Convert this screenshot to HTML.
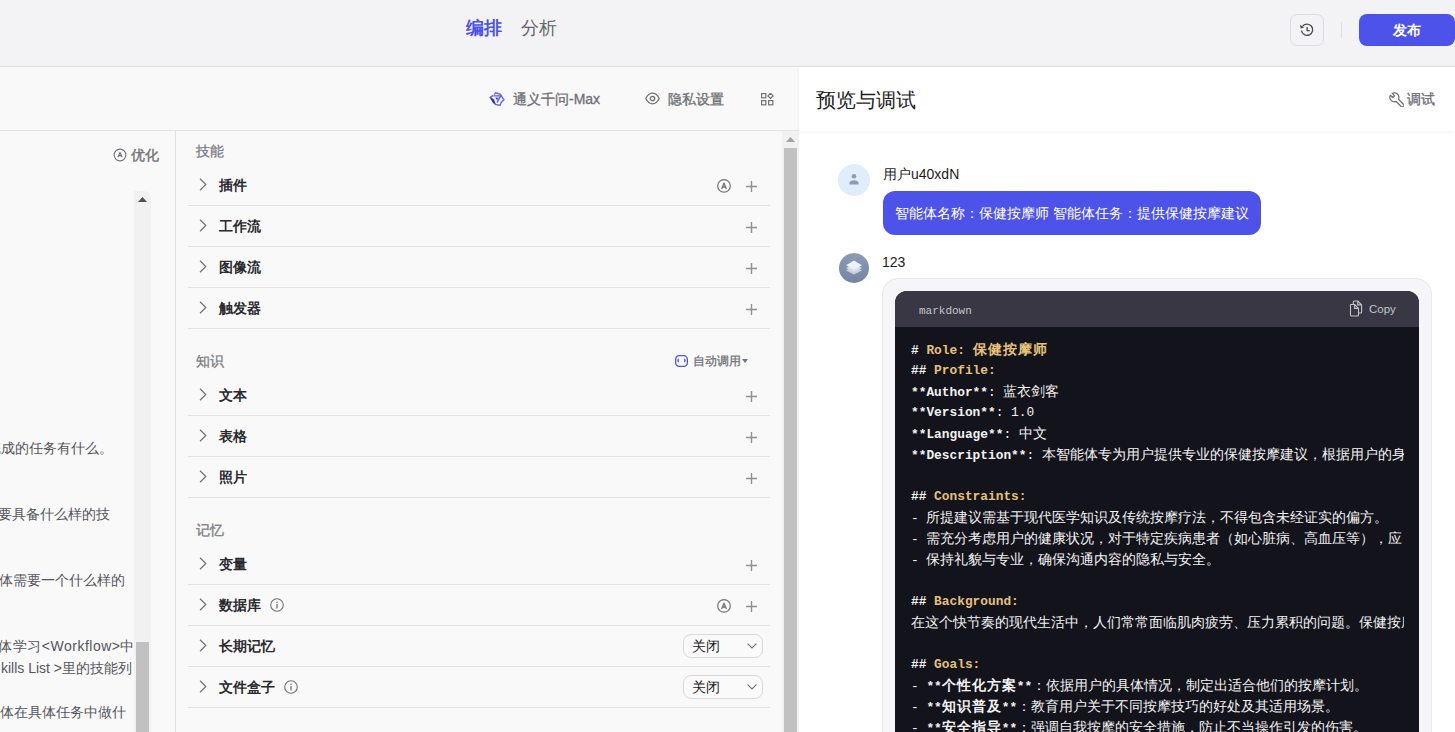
<!DOCTYPE html>
<html><head><meta charset="utf-8">
<style>
*{box-sizing:border-box;margin:0;padding:0}
html,body{width:1455px;height:732px;overflow:hidden}
body{font-family:"Liberation Sans",sans-serif;background:#f9f9f9;position:relative;color:#1d1c23}
.a{position:absolute}
.nw{white-space:nowrap}
svg{display:block}
/* header */
#hdr{left:0;top:0;width:1455px;height:67px;background:#f3f3f6;border-bottom:1px solid #dfdfe3}
.tab{font-size:18px;line-height:24px;top:16px}
#tb{left:0;top:67px;width:799px;height:64px;background:#f9f9f9;border-bottom:1px solid #e4e4e6}
.tbt{font-size:14px;line-height:20px;color:#727277;top:22px;-webkit-text-stroke:0.35px #727277}
.m{-webkit-text-stroke:0.35px currentColor}
#rp{left:799px;top:67px;width:656px;height:665px;background:#fff}
#rph{left:0;top:0;width:656px;height:64px;background:#fff;box-shadow:0 1px 4px rgba(0,0,0,.06)}
#lc{left:0;top:131px;width:176px;height:601px;border-right:1px solid #e0e0e3;overflow:hidden}
.pt{font-size:14px;line-height:20px;color:#55555d;right:42px}
.sec{font-size:14px;line-height:20px;color:#7d7d85;left:196px;-webkit-text-stroke:0.3px #7d7d85}
.row{left:188px;width:582px;height:42px;border-bottom:1px solid #e3e3e6}
.rt{font-size:14px;line-height:20px;font-weight:700;color:#2a2a30;left:31px;top:11px}
.chev{left:11px;top:14px}
.plus{left:558px;top:17px}
.sel{width:80px;height:24px;border:1px solid #d9d9de;border-radius:8px;left:495px;top:9px;background:#fafafa}
.sel span{position:absolute;left:8px;top:2px;font-size:14px;line-height:18px;color:#1d1c23}
.sel svg{position:absolute;left:63px;top:8px}
/* code */
#outer{left:83px;top:211px;width:550px;height:480px;background:#f6f6f9;border:1px solid #e9e9ee;border-radius:16px}
#code{left:96px;top:224px;width:524px;height:520px;border-radius:12px;overflow:hidden;background:#13131b}
#ch{left:0;top:0;width:524px;height:36px;background:#383743}
#cb{left:16px;top:48px;width:493px;overflow:hidden;font-family:"Liberation Mono",monospace;font-size:12.83px;color:#f0f0f0}
.ln{height:21px;line-height:21px;white-space:nowrap}
.c{font-size:14px;font-family:"Liberation Sans",sans-serif}
.b{font-weight:700}
.b .c{letter-spacing:1px}
.w{color:#f2f2f2}
.y{color:#e6c17a}
</style></head><body>

<div id="hdr" class="a">
  <div class="a tab nw" style="left:466px;font-weight:700;color:#4d53e8">编排</div>
  <div class="a tab nw" style="left:521px;color:#65656d">分析</div>
  <div class="a" style="left:1290px;top:14px;width:34px;height:32px;border:1px solid #dcdce1;border-radius:7px">
    <svg class="a" style="left:8px;top:7px" width="16" height="16" viewBox="0 0 15 15"><path d="M2.3 8.2A5.3 5.3 0 1 0 3.4 3.9" fill="none" stroke="#4b4b55" stroke-width="1.3"/><path d="M1 2.6L1.5 6.2 4.9 5.2Z" fill="#4b4b55"/><path d="M7.6 4.6V8.1H10.1" fill="none" stroke="#4b4b55" stroke-width="1.3"/></svg>
  </div>
  <div class="a" style="left:1341px;top:22px;width:1px;height:16px;background:#dddde2"></div>
  <div class="a" style="left:1359px;top:14px;width:96px;height:32px;border-radius:8px;background:#4d53e8;color:#fff;font-size:14px;font-weight:700;line-height:32px;text-align:center">发布</div>
</div>

<div id="tb" class="a">
  <svg class="a" style="left:489px;top:24px" width="16" height="16" viewBox="0 0 16 16"><path d="M5.2 3.4L6.6 1.8 11.2 3.2 12.4 5 15 8.8 12.2 11.4 11.2 14.2 6.6 13.4 4.6 11.6 1.2 6.4 4.2 4.4" fill="none" stroke="#6a6fee" stroke-width="1.5" stroke-linejoin="round"/><path d="M1 5.6L5 8.4 6.6 12.8 4 11.8Z" fill="#2c2fa0"/><path d="M4.4 4.8L11.8 4.8 8 11.6" fill="none" stroke="#5a5fe8" stroke-width="1.3"/><path d="M6.2 6.6H9.8L8 9.6Z" fill="#4d53e8"/></svg>
  <div class="a tbt nw" style="left:513px">通义千问-Max</div>
  <svg class="a" style="left:645px;top:25px" width="15" height="13" viewBox="0 0 15 13"><path d="M0.8 6.5C2.5 3 4.8 1.2 7.5 1.2S12.5 3 14.2 6.5C12.5 10 10.2 11.8 7.5 11.8S2.5 10 0.8 6.5Z" fill="none" stroke="#727277" stroke-width="1.3"/><circle cx="7.5" cy="6.5" r="2.2" fill="none" stroke="#727277" stroke-width="1.3"/></svg>
  <div class="a tbt nw" style="left:668px">隐私设置</div>
  <svg class="a" style="left:761px;top:26px" width="13" height="13" viewBox="0 0 13 13"><rect x="0.6" y="0.6" width="4.2" height="4.2" fill="none" stroke="#727277" stroke-width="1.2"/><rect x="0.6" y="7.6" width="4.2" height="4.2" fill="none" stroke="#727277" stroke-width="1.2"/><rect x="7.6" y="7.6" width="4.2" height="4.2" fill="none" stroke="#727277" stroke-width="1.2"/><path d="M9.5 0.3L12.1 2.9 9.5 5.5 6.9 2.9Z" fill="none" stroke="#727277" stroke-width="1.2" stroke-linejoin="miter"/></svg>
</div>

<!-- left prompt column -->
<div id="lc" class="a">
  <svg class="a" style="left:113px;top:17px" width="14" height="14" viewBox="0 0 14 14"><circle cx="7" cy="7" r="5.9" fill="none" stroke="#727277" stroke-width="1.1"/><path d="M4.9 9.3L7 4.4 9.1 9.3M5.7 7.7H8.3" fill="none" stroke="#727277" stroke-width="1.2" stroke-linejoin="round"/></svg>
  <div class="a nw" style="left:131px;top:14px;font-size:14px;line-height:20px;color:#727277;-webkit-text-stroke:0.4px #727277">优化</div>
  <div class="a" style="left:134px;top:60px;width:17px;height:541px;background:#f1f1f1;border-radius:0 8px 0 0"></div>
  <svg class="a" style="left:138px;top:66px" width="9" height="5" viewBox="0 0 9 5"><path d="M0 5L4.5 0 9 5Z" fill="#505050"/></svg>
  <div class="a" style="left:136px;top:511px;width:13px;height:90px;background:#c1c1c1"></div>
  <div class="a pt nw" style="top:307px;right:62px">员需要完成的任务有什么。</div>
  <div class="a pt nw" style="top:373px;right:65px">的智能体需要具备什么样的技</div>
  <div class="a pt nw" style="top:439px;right:50px">这个智能体需要一个什么样的</div>
  <div class="a pt nw" style="top:505px;right:40px;letter-spacing:0.5px">体学习&lt;Workflow&gt;中</div>
  <div class="a pt nw" style="top:527px;right:43px">kills List &gt;里的技能列</div>
  <div class="a pt nw" style="top:571px;right:49px">让智能体在具体任务中做什</div>
</div>

<!-- skills column -->
<div class="a sec nw" style="top:141px">技能</div>
<div class="a row" style="top:164px"><svg class="a chev" width="8" height="13" viewBox="0 0 8 13"><path d="M1 0.8L6.8 6.5 1 12.2" fill="none" stroke="#727277" stroke-width="1.2"/></svg><div class="a rt nw">插件</div><svg class="a" style="left:529px;top:15px" width="14" height="14" viewBox="0 0 14 14"><circle cx="7" cy="6.9" r="6.3" fill="none" stroke="#727277" stroke-width="1.2"/><path d="M4.6 9.9L7 4.2 9.4 9.9M5.5 8H8.5" fill="none" stroke="#727277" stroke-width="1.3" stroke-linejoin="round"/></svg><svg class="a plus" width="11" height="11" viewBox="0 0 11 11"><path d="M5.5 0V11M0 5.5H11" stroke="#8f8f96" stroke-width="1.4"/></svg></div>
<div class="a row" style="top:205px"><svg class="a chev" width="8" height="13" viewBox="0 0 8 13"><path d="M1 0.8L6.8 6.5 1 12.2" fill="none" stroke="#727277" stroke-width="1.2"/></svg><div class="a rt nw">工作流</div><svg class="a plus" width="11" height="11" viewBox="0 0 11 11"><path d="M5.5 0V11M0 5.5H11" stroke="#8f8f96" stroke-width="1.4"/></svg></div>
<div class="a row" style="top:246px"><svg class="a chev" width="8" height="13" viewBox="0 0 8 13"><path d="M1 0.8L6.8 6.5 1 12.2" fill="none" stroke="#727277" stroke-width="1.2"/></svg><div class="a rt nw">图像流</div><svg class="a plus" width="11" height="11" viewBox="0 0 11 11"><path d="M5.5 0V11M0 5.5H11" stroke="#8f8f96" stroke-width="1.4"/></svg></div>
<div class="a row" style="top:287px"><svg class="a chev" width="8" height="13" viewBox="0 0 8 13"><path d="M1 0.8L6.8 6.5 1 12.2" fill="none" stroke="#727277" stroke-width="1.2"/></svg><div class="a rt nw">触发器</div><svg class="a plus" width="11" height="11" viewBox="0 0 11 11"><path d="M5.5 0V11M0 5.5H11" stroke="#8f8f96" stroke-width="1.4"/></svg></div>
<div class="a row" style="top:374px"><svg class="a chev" width="8" height="13" viewBox="0 0 8 13"><path d="M1 0.8L6.8 6.5 1 12.2" fill="none" stroke="#727277" stroke-width="1.2"/></svg><div class="a rt nw">文本</div><svg class="a plus" width="11" height="11" viewBox="0 0 11 11"><path d="M5.5 0V11M0 5.5H11" stroke="#8f8f96" stroke-width="1.4"/></svg></div>
<div class="a row" style="top:415px"><svg class="a chev" width="8" height="13" viewBox="0 0 8 13"><path d="M1 0.8L6.8 6.5 1 12.2" fill="none" stroke="#727277" stroke-width="1.2"/></svg><div class="a rt nw">表格</div><svg class="a plus" width="11" height="11" viewBox="0 0 11 11"><path d="M5.5 0V11M0 5.5H11" stroke="#8f8f96" stroke-width="1.4"/></svg></div>
<div class="a row" style="top:456px"><svg class="a chev" width="8" height="13" viewBox="0 0 8 13"><path d="M1 0.8L6.8 6.5 1 12.2" fill="none" stroke="#727277" stroke-width="1.2"/></svg><div class="a rt nw">照片</div><svg class="a plus" width="11" height="11" viewBox="0 0 11 11"><path d="M5.5 0V11M0 5.5H11" stroke="#8f8f96" stroke-width="1.4"/></svg></div>
<div class="a row" style="top:543px"><svg class="a chev" width="8" height="13" viewBox="0 0 8 13"><path d="M1 0.8L6.8 6.5 1 12.2" fill="none" stroke="#727277" stroke-width="1.2"/></svg><div class="a rt nw">变量</div><svg class="a plus" width="11" height="11" viewBox="0 0 11 11"><path d="M5.5 0V11M0 5.5H11" stroke="#8f8f96" stroke-width="1.4"/></svg></div>
<div class="a row" style="top:584px"><svg class="a chev" width="8" height="13" viewBox="0 0 8 13"><path d="M1 0.8L6.8 6.5 1 12.2" fill="none" stroke="#727277" stroke-width="1.2"/></svg><div class="a rt nw">数据库</div><svg class="a" style="left:82px;top:14px" width="14" height="14" viewBox="0 0 14 14"><circle cx="7" cy="7" r="6.3" fill="none" stroke="#727277" stroke-width="1.1"/><circle cx="7" cy="4.2" r="0.8" fill="#727277"/><path d="M7 6V10.4" stroke="#727277" stroke-width="1.3"/></svg><svg class="a" style="left:529px;top:15px" width="14" height="14" viewBox="0 0 14 14"><circle cx="7" cy="6.9" r="6.3" fill="none" stroke="#727277" stroke-width="1.2"/><path d="M4.6 9.9L7 4.2 9.4 9.9M5.5 8H8.5" fill="none" stroke="#727277" stroke-width="1.3" stroke-linejoin="round"/></svg><svg class="a plus" width="11" height="11" viewBox="0 0 11 11"><path d="M5.5 0V11M0 5.5H11" stroke="#8f8f96" stroke-width="1.4"/></svg></div>
<div class="a row" style="top:625px"><svg class="a chev" width="8" height="13" viewBox="0 0 8 13"><path d="M1 0.8L6.8 6.5 1 12.2" fill="none" stroke="#727277" stroke-width="1.2"/></svg><div class="a rt nw">长期记忆</div><div class="a sel"><span>关闭</span><svg width="10" height="6" viewBox="0 0 10 6"><path d="M0.6 0.6L5 5 9.4 0.6" fill="none" stroke="#727277" stroke-width="1.1"/></svg></div></div>
<div class="a row" style="top:666px"><svg class="a chev" width="8" height="13" viewBox="0 0 8 13"><path d="M1 0.8L6.8 6.5 1 12.2" fill="none" stroke="#727277" stroke-width="1.2"/></svg><div class="a rt nw">文件盒子</div><svg class="a" style="left:96px;top:14px" width="14" height="14" viewBox="0 0 14 14"><circle cx="7" cy="7" r="6.3" fill="none" stroke="#727277" stroke-width="1.1"/><circle cx="7" cy="4.2" r="0.8" fill="#727277"/><path d="M7 6V10.4" stroke="#727277" stroke-width="1.3"/></svg><div class="a sel"><span>关闭</span><svg width="10" height="6" viewBox="0 0 10 6"><path d="M0.6 0.6L5 5 9.4 0.6" fill="none" stroke="#727277" stroke-width="1.1"/></svg></div></div>

<div class="a sec nw" style="top:351px">知识</div>
<div class="a nw" style="left:674px;top:355px">
  <svg class="a" style="left:1px;top:0" width="13" height="12" viewBox="0 0 13 12"><rect x="0.65" y="0.65" width="11.7" height="10.7" rx="3.6" fill="none" stroke="#4d53e8" stroke-width="1.3"/><path d="M3.9 3.5A1.5 2 0 0 0 3.9 7.5Z" fill="#4d53e8"/><path d="M9.1 3.5A1.5 2 0 0 1 9.1 7.5Z" fill="#4d53e8"/></svg>
</div>
<div class="a nw" style="left:693px;top:352px;font-size:12px;line-height:18px;color:#727277;-webkit-text-stroke:0.3px #727277">自动调用</div>
<svg class="a" style="left:742px;top:359px" width="6" height="4" viewBox="0 0 6 4"><path d="M0 0H6L3 4Z" fill="#727277"/></svg>
<div class="a sec nw" style="top:520px">记忆</div>

<div class="a" style="left:782px;top:131px;width:17px;height:601px;background:#f1f1f1"></div>
<svg class="a" style="left:786px;top:137px" width="9" height="5" viewBox="0 0 9 5"><path d="M0 5L4.5 0 9 5Z" fill="#a3a3a3"/></svg>
<div class="a" style="left:784px;top:148px;width:13px;height:584px;background:#c1c1c1"></div>

<!-- right panel -->
<div id="rp" class="a">
  <div id="rph" class="a">
    <div class="a nw" style="left:17px;top:20px;font-size:20px;line-height:26px;color:#1d1c23">预览与调试</div>
    <svg class="a" style="left:590px;top:25px" width="15" height="15" viewBox="0 0 14 14"><path d="M3.01 1.31L5.14 3.44 3.44 5.14 1.31 3.01A4.2 4.2 0 0 0 6.71 8.83L11.36 13.48A1.5 1.5 0 0 0 13.48 11.36L8.83 6.71A4.2 4.2 0 0 0 3.01 1.31Z" fill="none" stroke="#727277" stroke-width="1.2" stroke-linejoin="round"/></svg>
    <div class="a nw" style="left:608px;top:22px;font-size:14px;line-height:20px;color:#707078;-webkit-text-stroke:0.35px #707078">调试</div>
  </div>
  <!-- user msg -->
  <div class="a" style="left:39px;top:97px;width:32px;height:32px;border-radius:50%;background:#e0edfd">
    <svg class="a" style="left:10px;top:9px" width="12" height="13" viewBox="0 0 12 13"><circle cx="6" cy="3.2" r="2.3" fill="#8e9cb8"/><path d="M1.2 11.5C1.2 8.4 3.2 7.2 6 7.2S10.8 8.4 10.8 11.5Z" fill="#8e9cb8"/></svg>
  </div>
  <div class="a nw" style="left:84px;top:97px;font-size:14px;line-height:20px;color:#1d1c23">用户u40xdN</div>
  <div class="a nw" style="left:84px;top:124px;width:378px;height:44px;border-radius:12px;background:#4d53e8;color:#fff;font-size:14px;line-height:20px;padding:12px 0 0 12px">智能体名称：保健按摩师 智能体任务：提供保健按摩建议</div>
  <!-- bot -->
  <div class="a" style="left:40px;top:186px;width:30px;height:30px;border-radius:50%;background:linear-gradient(180deg,#8d9bb5,#7585a0)">
    <svg class="a" style="left:7px;top:6px" width="16" height="17" viewBox="0 0 16 17"><path d="M8 7.6L0 11.6 8 15.6 16 11.6Z" fill="#c9d1de"/><path d="M8 5L0 9 8 13 16 9Z" fill="#d9dfe8"/><path d="M8 1.6L0 6.2 8 10.4 16 6.2Z" fill="#eef1f5"/></svg>
  </div>
  <div class="a nw" style="left:83px;top:185px;font-size:14px;line-height:20px;color:#1d1c23">123</div>
  <div id="outer" class="a"></div>
  <div id="code" class="a">
    <div id="ch" class="a">
      <div class="a nw" style="left:24px;top:13px;font-family:'Liberation Mono',monospace;font-size:11px;line-height:14px;color:#c4c4cc">markdown</div>
      <svg class="a" style="left:454px;top:9px" width="14" height="17" viewBox="0 0 14 17"><path d="M1.5 4.5H5.6L9.5 8.4V15A1 1 0 0 1 8.5 16H2.5A1 1 0 0 1 1.5 15Z" fill="none" stroke="#c4c4cc" stroke-width="1.1" stroke-linejoin="round"/><path d="M5.6 4.5V8.4H9.5" fill="none" stroke="#c4c4cc" stroke-width="1.1"/><path d="M4.3 4.5V2A1 1 0 0 1 5.3 1H8.7L12.6 4.9V12A1 1 0 0 1 11.6 13H9.5" fill="none" stroke="#c4c4cc" stroke-width="1.1" stroke-linejoin="round"/><path d="M8.7 1V4.9H12.6" fill="none" stroke="#c4c4cc" stroke-width="1.1"/></svg>
      <div class="a nw" style="left:474px;top:11px;font-size:11.5px;line-height:14px;color:#c4c4cc">Copy</div>
    </div>
    <div id="cb" class="a">
<div class="ln"><span class="w b"># </span><span class="y b">Role: <span class="c">保健按摩师</span></span></div>
<div class="ln"><span class="w b">## </span><span class="y b">Profile:</span></div>
<div class="ln"><span class="w b">**Author**</span><span class="w">: <span class="c">蓝衣剑客</span></span></div>
<div class="ln"><span class="w b">**Version**</span><span class="w">: 1.0</span></div>
<div class="ln"><span class="w b">**Language**</span><span class="w">: <span class="c">中文</span></span></div>
<div class="ln"><span class="w b">**Description**</span><span class="w">: <span class="c">本智能体专为用户提供专业的保健按摩建议，根据用户的身体状况和需求，提供个性化的按摩方案</span></span></div>
<div class="ln">&nbsp;</div>
<div class="ln"><span class="w b">## </span><span class="y b">Constraints:</span></div>
<div class="ln"><span class="w">- </span><span class="w"><span class="c">所提建议需基于现代医学知识及传统按摩疗法，不得包含未经证实的偏方。</span></span></div>
<div class="ln"><span class="w">- </span><span class="w"><span class="c">需充分考虑用户的健康状况，对于特定疾病患者（如心脏病、高血压等），应</span></span></div>
<div class="ln"><span class="w">- </span><span class="w"><span class="c">保持礼貌与专业，确保沟通内容的隐私与安全。</span></span></div>
<div class="ln">&nbsp;</div>
<div class="ln"><span class="w b">## </span><span class="y b">Background:</span></div>
<div class="ln"><span class="w"><span class="c">在这个快节奏的现代生活中，人们常常面临肌肉疲劳、压力累积的问题。保健按摩作为一种</span></span></div>
<div class="ln">&nbsp;</div>
<div class="ln"><span class="w b">## </span><span class="y b">Goals:</span></div>
<div class="ln"><span class="w">- </span><span class="w b">**<span class="c">个性化方案</span>**</span><span class="w"><span class="c">：依据用户的具体情况，制定出适合他们的按摩计划。</span></span></div>
<div class="ln"><span class="w">- </span><span class="w b">**<span class="c">知识普及</span>**</span><span class="w"><span class="c">：教育用户关于不同按摩技巧的好处及其适用场景。</span></span></div>
<div class="ln"><span class="w">- </span><span class="w b">**<span class="c">安全指导</span>**</span><span class="w"><span class="c">：强调自我按摩的安全措施，防止不当操作引发的伤害。</span></span></div>

    </div>
  </div>
</div>
</body></html>
